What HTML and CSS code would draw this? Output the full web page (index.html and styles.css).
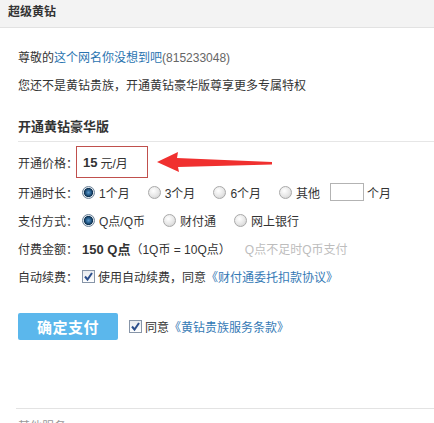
FILE: index.html
```html
<!DOCTYPE html>
<html lang="zh-CN">
<head>
<meta charset="utf-8">
<title>超级黄钻</title>
<link rel="stylesheet" href="styles.css">
</head>
<body>
<div class="header">超级黄钻</div>
<div class="content">
  <p class="greet">尊敬的<a class="link" href="#">这个网名你没想到吧</a><span class="qq">(815233048)</span></p>
  <p class="line">您还不是黄钻贵族，开通黄钻豪华版尊享更多专属特权</p>
  <h2 class="title">开通黄钻豪华版</h2>

  <div class="row row-price">
    <span class="label label-price">开通价格：</span>
    <span class="price-box"><b class="num">15</b> 元/月</span>
    <svg class="arrow" width="120" height="26" viewBox="0 0 120 26">
      <polygon points="0,13 21,3 20,9 115,13 115,15.5 21,18 22,23" fill="#f0302f"/>
    </svg>
  </div>

  <div class="row">
    <span class="label">开通时长：</span>
    <span class="opt"><i class="radio on"></i>1个月</span>
    <span class="opt"><i class="radio"></i>3个月</span>
    <span class="opt"><i class="radio"></i>6个月</span>
    <span class="opt opt-tight"><i class="radio"></i>其他</span>
    <span class="box-input"></span>
    <span>个月</span>
  </div>

  <div class="row">
    <span class="label">支付方式：</span>
    <span class="opt"><i class="radio on"></i>Q点/Q币</span>
    <span class="opt"><i class="radio"></i>财付通</span>
    <span class="opt"><i class="radio"></i>网上银行</span>
  </div>

  <div class="row">
    <span class="label">付费金额：</span>
    <b class="amount">150 Q点</b>
    <span class="rate">（1Q币 = 10Q点）</span>
    <span class="note">Q点不足时Q币支付</span>
  </div>

  <div class="row">
    <span class="label">自动续费：</span>
    <span class="check-item"><i class="check"><svg width="11" height="11" viewBox="0 0 11 11"><path d="M2 5.5 L4.5 8.5 L9 2" fill="none" stroke="#2c4f8c" stroke-width="2"/></svg></i>使用自动续费，同意<a class="link2" href="#">《财付通委托扣款协议》</a></span>
  </div>

  <div class="actions">
    <button class="btn" type="button">确定支付</button>
    <span class="check-item"><i class="check"><svg width="11" height="11" viewBox="0 0 11 11"><path d="M2 5.5 L4.5 8.5 L9 2" fill="none" stroke="#2c4f8c" stroke-width="2"/></svg></i>同意<a class="link2" href="#">《黄钻贵族服务条款》</a></span>
  </div>

  <div class="footer">其他服务</div>
</div>
</body>
</html>
```

FILE: styles.css
```css
html, body {
  margin: 0;
  padding: 0;
  background: #fff;
}
body {
  font-family: "Liberation Sans", "Noto Sans CJK SC", sans-serif;
  font-size: 12px;
  color: #333;
  width: 434px;
  height: 423px;
  overflow: hidden;
}
.header {
  height: 27px;
  line-height: 25px;
  background: #f3f3f3;
  border-bottom: 1px solid #e2e2e2;
  padding-left: 8px;
  font-weight: bold;
  color: #333;
}
.content {
  padding-left: 18px;
}
.greet, .line {
  margin: 0;
  height: 28px;
  line-height: 28px;
}
.greet {
  margin-top: 16px;
}
.link {
  color: #2a74b0;
  text-decoration: none;
}
.qq {
  color: #666;
}
.title {
  margin: 13px 0 0;
  font-size: 13px;
  font-weight: bold;
  height: 28px;
  line-height: 28px;
  border-bottom: 1px solid #e6e6e6;
  color: #333;
}
.row {
  display: flex;
  align-items: center;
  height: 28px;
  white-space: nowrap;
}
.row-price {
  position: relative;
  height: 32px;
  margin-top: 4px;
}
.label {
  width: 58px;
  flex: none;
  margin-right: 6px;
}
.label-price {
  margin-right: 0;
}
.price-box {
  display: flex;
  align-items: center;
  box-sizing: border-box;
  width: 72px;
  height: 32px;
  border: 1px solid #c0504d;
  padding-left: 6px;
  gap: 3px;
}
.num {
  font-size: 13px;
  color: #333;
}
.arrow {
  position: absolute;
  left: 139px;
  top: 3px;
}
.opt {
  display: flex;
  align-items: center;
  margin-right: 18px;
}
.opt-tight {
  margin-right: 10px;
}
.radio {
  box-sizing: border-box;
  width: 13px;
  height: 13px;
  border-radius: 50%;
  border: 1px solid #a9a9a9;
  background: radial-gradient(circle at 40% 35%, #ffffff 0%, #e6e6e6 55%, #c9c9c9 100%);
  margin-right: 4px;
  display: inline-block;
}
.radio.on {
  border-color: #6d8297;
  background: radial-gradient(circle at 50% 50%, #5b9bd0 0%, #1d4f7a 40%, #0e2f4d 55%, #d9e2ea 62%, #f3f6f8 100%);
}
.box-input {
  display: inline-block;
  box-sizing: border-box;
  width: 34px;
  height: 18px;
  border: 1px solid #b3b3b3;
  margin-right: 3px;
}
.amount {
  font-size: 13px;
  color: #333;
}
.note {
  color: #bdbdbd;
  margin-left: 14px;
}
.check-item {
  display: flex;
  align-items: center;
}
.check {
  box-sizing: border-box;
  width: 13px;
  height: 13px;
  border: 1px solid #8795a8;
  background: linear-gradient(#e8ebef, #ffffff);
  margin-right: 3px;
  display: inline-flex;
  align-items: center;
  justify-content: center;
}
.link2 {
  color: #3479b5;
  text-decoration: none;
}
.actions {
  display: flex;
  align-items: center;
  margin-top: 23px;
  gap: 11px;
}
.btn {
  width: 100px;
  height: 27px;
  border: none;
  border-radius: 2px;
  background: #5bb7ec;
  color: #fff;
  font-family: "Noto Sans CJK SC", sans-serif;
  font-size: 15px;
  font-weight: bold;
  padding: 0;
  letter-spacing: 0.5px;
}
.footer {
  margin-top: 68px;
  margin-left: -2px;
  border-top: 1px solid #e3e3e3;
  padding-top: 8px;
  padding-left: 2px;
  color: #999;
}
```
